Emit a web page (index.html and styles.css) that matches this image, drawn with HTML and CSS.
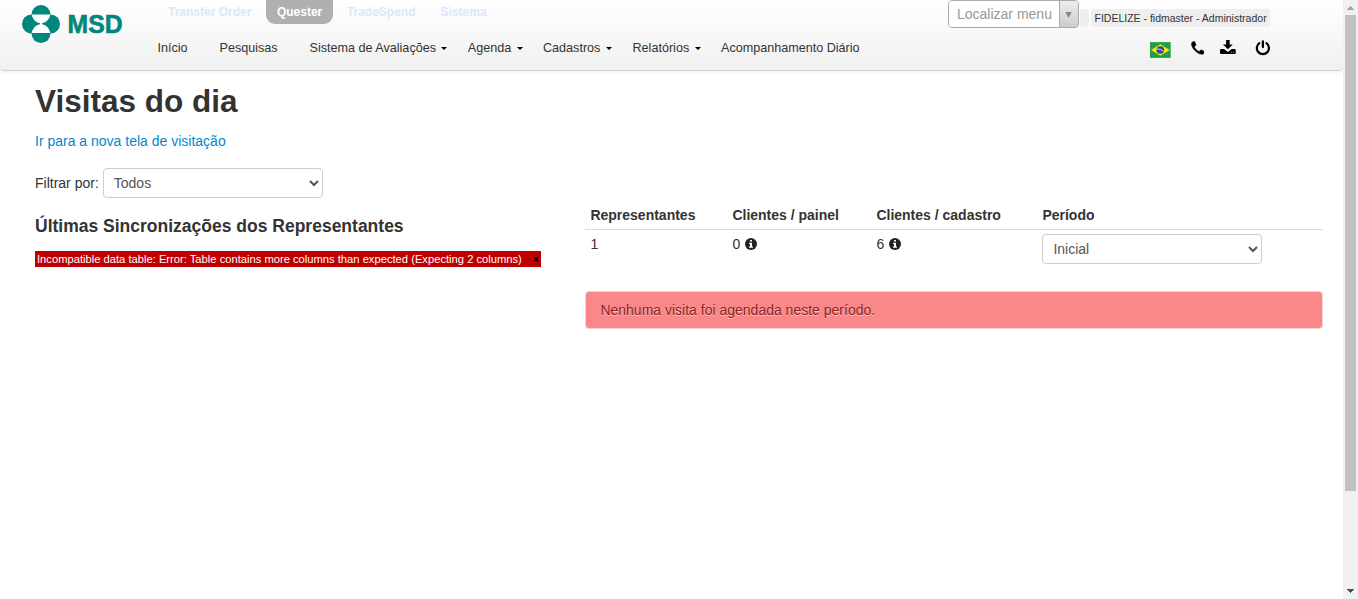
FILE: index.html
```html
<!DOCTYPE html>
<html lang="pt-BR">
<head>
<meta charset="utf-8">
<title>Visitas do dia</title>
<link rel="stylesheet" href="styles.css">
</head>
<body>
<div class="page">
  <header class="navbar">
    <svg class="logo" width="110" height="48" viewBox="0 0 110 48">
      <g fill="#00877c">
        <circle cx="26" cy="14.3" r="9.4"/><circle cx="26" cy="33.5" r="9.4"/>
        <circle cx="16.4" cy="24" r="9.4"/><circle cx="35.6" cy="24" r="9.4"/>
        <rect x="17" y="15" width="18" height="18"/>
      </g>
      <path fill="#fff" d="M16.6 14.6H35.4C34.5 19 31.5 22.6 27 23.3V24.2C31.5 25 34.5 28.5 35.4 33H16.6C17.5 28.5 20.5 25 25 24.2V23.3C20.5 22.6 17.5 19 16.6 14.6Z"/>
      <text class="logo-text" x="52.6" y="32.8" textLength="55" lengthAdjust="spacingAndGlyphs">MSD</text>
    </svg>
    <div class="menus">
      <nav class="systems">
        <a>Transfer Order</a><a class="active">Quester</a><a>TradeSpend</a><a>Sistema</a>
      </nav>
      <nav class="menu">
        <a>Início</a><a>Pesquisas</a><a>Sistema de Avaliações<i class="caret"></i></a><a>Agenda<i class="caret"></i></a><a>Cadastros<i class="caret"></i></a><a>Relatórios<i class="caret"></i></a><a>Acompanhamento Diário</a>
      </nav>
    </div>
    <div class="account">
      <div class="account-top">
        <div class="combo"><span class="combo-text">Localizar menu</span><span class="combo-button"><svg width="7" height="6" viewBox="0 0 7 6"><path fill="#888" d="M.3 0H6.7L3.5 6Z"/></svg></span></div>
        <span class="tag empty"></span><span class="tag">FIDELIZE - fidmaster - Administrador</span>
      </div>
      <div class="icons">
        <svg class="flag" width="21" height="16" viewBox="0 0 21 16"><path fill="#229e45" d="M0 0H21V16H0Z"/><path fill="#f8e509" d="M10.5 2.2L20 8L10.5 13.8L1 8Z"/><circle cx="10.5" cy="8" r="3.9" fill="#2b49a3"/><path fill="none" stroke="#fff" stroke-width=".8" d="M7 6.9Q11 6.5 14 9.6"/></svg>
        <svg class="phone" width="14" height="14" viewBox="0 0 14 14"><path stroke="#000" stroke-width=".4" d="M3.2.2Q1.4.5.6 1.8C-.1 4 1.2 7 4.1 9.8S10.2 13.9 12.2 13.3Q13.5 12.6 13.8 10.9Q13.7 10.4 12.8 10L10.5 8.9Q10 8.7 9.6 9.2L8.6 10.3Q8.2 10.6 7.6 10.2Q5 8.8 3.7 6.4Q3.4 5.8 3.8 5.5L4.8 4.5Q5.2 4.1 5 3.6L3.9.7Q3.6.2 3.2.2Z"/></svg>
        <svg class="download" width="16" height="15" viewBox="0 0 16 15"><path d="M6.2 0H9.8V4.4H13L8 9.4L3 4.4H6.2ZM1.2 9H4.1L8 12L11.9 9H14.8Q16 9 16 10.2V13.2Q16 14.2 14.8 14.2H1.2Q0 14.2 0 13.2V10.2Q0 9 1.2 9Z"/><path fill="#999" d="M11 11.9H12V12.9H11ZM13.3 11.9H14.3V12.9H13.3Z"/></svg>
        <svg class="power" width="16" height="16" viewBox="0 0 16 16"><path fill="none" stroke="#000" stroke-width="2.3" stroke-linecap="round" d="M4.4 3A6.2 6.2 0 1 0 11.6 3M8 1.2V7"/></svg>
      </div>
    </div>
  </header>
  <main class="content">
    <h1>Visitas do dia</h1>
    <a class="link">Ir para a nova tela de visitação</a>
    <div class="filter"><label for="filtro">Filtrar por:</label><select id="filtro"><option>Todos</option></select></div>
    <div class="columns">
      <section>
        <h2>Últimas Sincronizações dos Representantes</h2>
        <div class="error"><span>Incompatible data table: Error: Table contains more columns than expected (Expecting 2 columns)</span><b>×</b></div>
      </section>
      <section class="summary">
        <table>
          <thead><tr><th class="c1">Representantes</th><th class="c2">Clientes / painel</th><th class="c3">Clientes / cadastro</th><th>Período</th></tr></thead>
          <tbody><tr>
            <td>1</td>
            <td>0 <svg class="info" width="12" height="12" viewBox="0 0 12 12"><circle cx="6" cy="6" r="6"/><path fill="#fff" d="M5 2H7V3.6H5ZM4 4.8H7V8.5H8V9.7H4V8.5H5V6H4Z"/></svg></td>
            <td>6 <svg class="info" width="12" height="12" viewBox="0 0 12 12"><circle cx="6" cy="6" r="6"/><path fill="#fff" d="M5 2H7V3.6H5ZM4 4.8H7V8.5H8V9.7H4V8.5H5V6H4Z"/></svg></td>
            <td><select><option>Inicial</option></select></td>
          </tr></tbody>
        </table>
        <div class="alert">Nenhuma visita foi agendada neste período.</div>
      </section>
    </div>
  </main>
</div>
<div class="scrollbar">
  <svg width="7" height="4" viewBox="0 0 7 4" shape-rendering="crispEdges"><path fill="#a3a3a3" d="M3 0H4V1H5V2H6V3H7V4H0V3H1V2H2V1H3Z"/></svg>
  <div class="thumb"></div>
  <svg class="down" width="7" height="4" viewBox="0 0 7 4" shape-rendering="crispEdges"><path fill="#505050" d="M0 0H7V1H6V2H5V3H4V4H3V3H2V2H1V1H0Z"/></svg>
</div>
</body>
</html>
```
FILE: styles.css
```css
* { box-sizing: border-box; }
body {
  margin: 0;
  display: flex;
  height: 599px;
  overflow: hidden;
  background: #fff;
  color: #333;
  font: 14px/20px "Liberation Sans", Arial, sans-serif;
}
.page { width: 1343px; }
.navbar {
  display: flex;
  height: 71px;
  padding-left: 15px;
  background: linear-gradient(#fff, #f0f0f0);
  border-bottom: 1px solid #d0d0d0;
  border-radius: 0 0 4px 4px;
  box-shadow: 0 1px 4px rgba(0, 0, 0, .07);
}
.logo { flex: none; }
.logo-text { font-size: 25.5px; font-weight: bold; fill: #00877c; stroke: #00877c; stroke-width: .6px; }
.menus { width: 823px; padding-left: 32px; }
.systems { display: flex; height: 24px; gap: 3px; font-size: 12px; font-weight: bold; line-height: 24px; }
.systems a { padding: 0 11px; color: #d9e8fb; }
.systems .active { margin: 0 -.4px 0 .5px; background: #b0b0b0; color: #fff; border-radius: 0 0 9px 9px; }
.menu {
  display: grid;
  grid-template-columns: 62px 90px 158.3px 75.2px 89.5px 88.5px auto;
  margin: 14px 0 0 .5px;
  font-size: 12.6px;
  white-space: nowrap;
}
.caret {
  display: inline-block;
  margin: 0 0 2px 5.4px;
  border: 3.5px solid transparent;
  border-width: 3px 3.5px 0;
  border-top-color: #000;
}
.account { width: 323px; }
.account-top { display: flex; height: 28px; }
.combo { display: flex; width: 131px; height: 28px; border: 1px solid #aaa; border-radius: 4px; overflow: hidden; }
.combo-text { flex: 1; padding-left: 8px; background: #fff; color: #999; line-height: 26px; white-space: nowrap; }
.combo-button { display: flex; align-items: center; justify-content: center; width: 19px; padding: 2px 2px 0 0; border-left: 1px solid #aaa; background: linear-gradient(#eee, #ccc); }
.tag { height: 18px; margin: 9px 0 0 2px; padding: 0 3px 0 3.5px; border-radius: 3px; background: #eee; font-size: 10.5px; line-height: 19px; white-space: nowrap; }
.tag.empty { width: 9px; margin-left: 1px; }
.icons { display: flex; padding: 13px 0 0 202px; }
.flag { margin-top: 1px; }
.phone { margin: 0 0 0 20px; }
.download { margin: -1px 0 0 16px; }
.power { margin: -1px 0 0 19px; }
.content { padding: 10px 20px 0 35px; }
h1 { margin: 0 0 20px; font-size: 31.5px; line-height: 40px; }
.link { display: block; color: #08c; margin-top: -10px; }
.filter { display: flex; gap: 4px; align-items: center; margin-top: 17px; }
select { width: 220px; height: 30px; padding: 4px 6px; border: 1px solid #ccc; border-radius: 4px; background: #fff; color: #555; font: inherit; }
.columns { display: grid; grid-template-columns: 506px 737.3px; column-gap: 44.4px; }
h2 { margin: 13px 0 10px; font-size: 17.5px; line-height: 30px; }
.error { display: flex; justify-content: space-between; height: 16px; padding: 0 2px; background: #c00000; color: #fff; font-size: 11.2px; line-height: 16px; white-space: nowrap; }
.error b { color: #000; }
.summary { padding-top: 3px; }
table { width: 100%; border-collapse: collapse; table-layout: fixed; }
th, td { padding: 4px 5px; text-align: left; vertical-align: top; }
th { height: 28px; }
td { height: 48px; border-top: 1px solid #ddd; }
.c1 { width: 142px; }
.c2 { width: 144px; }
.c3 { width: 166px; }
.info { margin-left: .6px; vertical-align: -1px; fill: #222; }
.alert { height: 38px; margin-top: 13px; padding: 8px 14px; border: 1px solid #eed3d7; border-radius: 4px; background: #fb8888; color: #8a1f25; text-shadow: 0 1px 0 rgba(255, 255, 255, .5); }
.scrollbar { display: flex; flex-direction: column; align-items: center; width: 15px; height: 599px; padding: 6px 0; background: #f1f1f1; }
.thumb { width: 11px; height: 476px; margin-top: 5px; background: #c1c1c1; }
.down { margin-top: auto; }
```
